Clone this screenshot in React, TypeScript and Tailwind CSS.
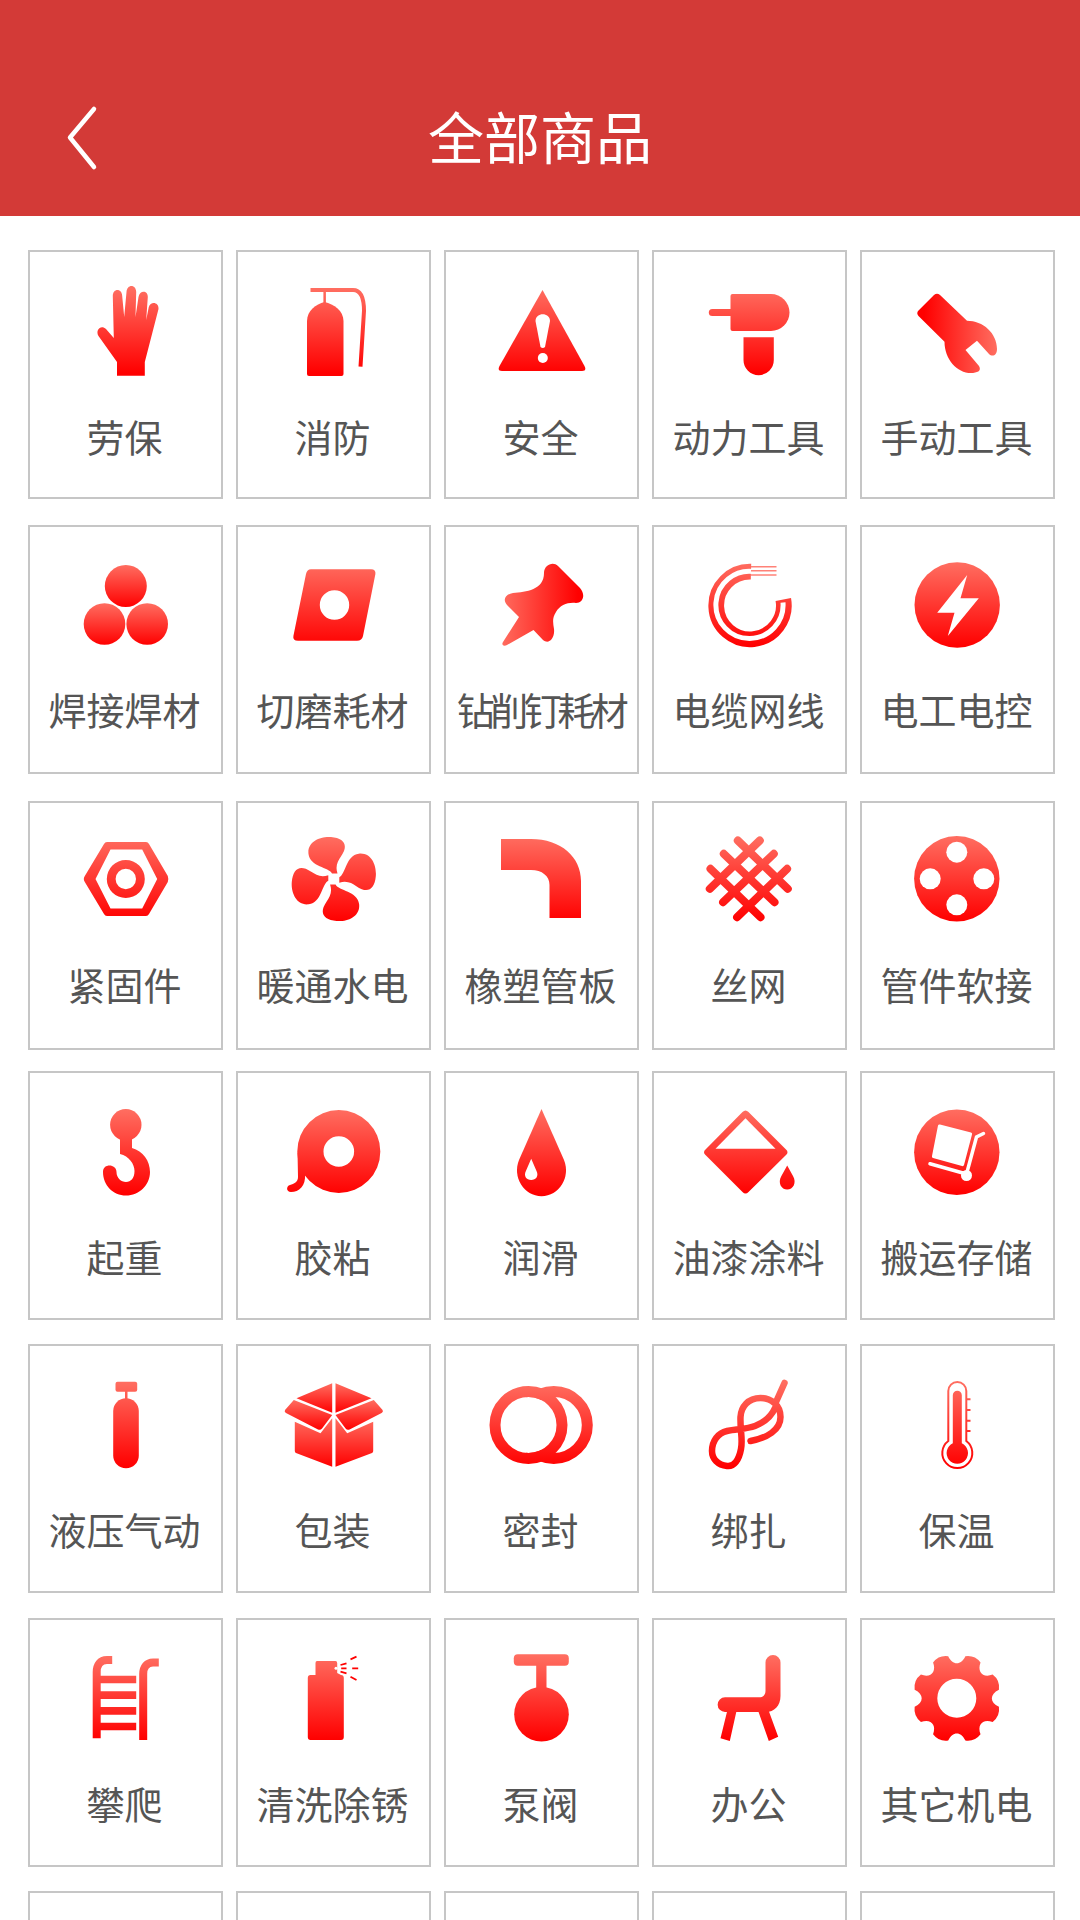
import { FC, ReactNode } from "react";

const V = "url(#rv)"; // whole-icon vertical fade
const B = "url(#rb)"; // fade per shape

const Ico: FC<{ children: ReactNode }> = ({ children }) => (
  <svg viewBox="0 0 100 100" className="ml-[2px] h-[100px] w-[100px] shrink-0 overflow-visible">
    {children}
  </svg>
);

const polar = (a: number, r: number) => {
  const t = (a * Math.PI) / 180;
  return `${(47.8 + r * Math.cos(t)).toFixed(2)} ${(50.3 + r * Math.sin(t)).toFixed(2)}`;
};

let gearPath = `M${polar(22.5 - 11, 43)}`;
for (let i = 0; i < 8; i++) {
  const a = 22.5 + i * 45;
  gearPath += ` Q${polar(a, 47)} ${polar(a + 11, 43)}`;
  gearPath += ` C${polar(a + 15, 33)} ${polar(a + 30, 33)} ${polar(a + 34, 43)}`;
}
gearPath += ` Z M${polar(0, 19.5)} A19.5 19.5 0 1 0 ${polar(180, 19.5)} A19.5 19.5 0 1 0 ${polar(0, 19.5)} Z`;

const blade = "M47 44.5 C44 38 25 38 23.5 25 C22 12 36 7 46 8 C57 9 62 14 59 22 C56 29 49 34 52.5 44.5 Z";

const rows = [
  {
    mt: "mt-[34px]",
    pt: "pt-[29px]",
    gap: "mt-[31px]",
    items: [
      {
        label: "劳保",
        icon: (
          <path
            fill={V}
            d="M40 81 L21.5 55 C18 49 24 43 29 48 L36.8 57 L35.8 15 C35.8 7 45 7 45.2 15 L47.2 36 L49.5 11 C50 3 59 3 59.2 11 L58.5 36 L61.5 16 C62.5 9 71 9 70.8 16 L69.2 39 L71.8 26 C73.5 20 82 21 81.5 28 L67.8 81 V94.7 H40 Z"
          />
        ),
      },
      {
        label: "消防",
        icon: (
          <>
            <path fill="none" stroke={V} strokeWidth="4" d="M25.5 9 H68 C76 9 79 16 79 30 L75.5 85.7" />
            <rect x="38.4" y="8" width="2.5" height="15" fill={V} />
            <path fill={V} d="M22 40 C22 30 31 23 39.5 21 C49 23 58.5 30 58.5 40 V93 Q58.5 95 56.5 95 H24 Q22 95 22 93 Z" />
          </>
        ),
      },
      {
        label: "安全",
        icon: (
          <>
            <path fill={V} d="M49.5 9 L91.5 85 Q94 90 89 90 H9 Q4 90 6.5 85 Z" />
            <path fill="#fff" d="M42.5 40 C42.5 31 57 31 57 40 L52 66 Q49.8 68 47.5 66 Z" />
            <circle cx="49.8" cy="77" r="5" fill="#fff" />
          </>
        ),
      },
      {
        label: "动力工具",
        icon: (
          <>
            <rect x="7.8" y="28" width="26" height="7" rx="3.5" fill={V} />
            <path fill={V} d="M29.5 15 Q29.5 13 31.5 13 H70 A18.5 18.5 0 0 1 70 50 H31.5 Q29.5 50 29.5 48 Z" />
            <path fill={V} d="M42.5 56.3 H72.8 V79 A15.1 15.1 0 0 1 42.5 79 Z" />
          </>
        ),
      },
      {
        label: "手动工具",
        icon: (
          <path
            fill="url(#rw)"
            d="M25 14 Q28 11.5 31 14 L58 39.7 C74 39.7 88 52 88 68 C88 75 83 76 80 73 L68 59.7 L56.5 69 L70 85 C73 90 68 92 62 92 C48 92 35.5 78 35.5 60.7 L9.5 35 Q7 32 9.5 29.5 Z"
          />
        ),
      },
    ],
  },
  {
    mt: "mt-[26px]",
    pt: "pt-[28px]",
    gap: "mt-[30px]",
    items: [
      {
        label: "焊接焊材",
        icon: (
          <>
            <circle cx="48.8" cy="31" r="21" fill={B} />
            <circle cx="27.5" cy="69" r="20.8" fill={B} />
            <circle cx="70.2" cy="69" r="20.8" fill={B} />
          </>
        ),
      },
      {
        label: "切磨耗材",
        icon: (
          <path
            fill={V}
            fillRule="evenodd"
            d="M26 14.3 H86 Q91 14.3 90.4 19 L78 81 Q77 85.7 72 85.7 H13 Q7.5 85.7 8.4 81 L21 19 Q22 14.3 26 14.3 Z M49.5 35.3 A14.7 14.7 0 1 0 49.5 64.7 A14.7 14.7 0 1 0 49.5 35.3 Z"
          />
        ),
      },
      {
        label: "钻削钉耗材",
        icon: (
          <path
            fill="url(#rh)"
            d="M51 18 C51 10 60 6 65 11 L87 33 C93 40 90 48 83 48 C75 47 67 50 63 57 C59 63 60 68 61 74 C62 83 56 90 50 85 L40.5 75 L14 90 C11 92 8 90 10 87 L26 62 L14 50 C9 44 13 39 20 38 C33 37 51 35 51 18 Z"
          />
        ),
      },
      {
        label: "电缆网线",
        icon: (
          <>
            <path fill="none" stroke={V} strokeWidth="15.7" d="M50 16.7 A33.8 33.8 0 1 0 82.3 44.5" />
            <path fill="none" stroke="#fff" strokeWidth="5" d="M53 16.6 A33.6 33.6 0 1 0 82 47.5" />
            <path fill="none" stroke="#ff8278" strokeWidth="1.4" d="M50 11.7 H75.5 M50 15.7 H75.5 M50 20 H75.5" />
          </>
        ),
      },
      {
        label: "电工电控",
        icon: (
          <>
            <circle cx="48.2" cy="50" r="42.7" fill={V} />
            <path fill="#fff" d="M58.2 20 L28.2 57.7 H45.5 L38.8 81 L69.8 43.3 H51.5 Z" />
          </>
        ),
      },
    ],
  },
  {
    mt: "mt-[27px]",
    pt: "pt-[26px]",
    gap: "mt-[31px]",
    items: [
      {
        label: "紧固件",
        icon: (
          <>
            <path
              fill={V}
              fillRule="evenodd"
              d="M30 13 H69 Q71 13 72 15 L90.8 47 Q91.8 50 90.8 53 L72 85 Q71 87 69 87 H30 Q28 87 27 85 L7.8 53 Q5.8 50 7.8 47 L27 15 Q28 13 30 13 Z M33.5 20.5 L18.5 50 L33.5 79.5 H65.2 L80.2 50 L65.2 20.5 Z"
            />
            <path
              fill={V}
              fillRule="evenodd"
              d="M48.8 31 A19 19 0 1 0 48.8 69 A19 19 0 1 0 48.8 31 Z M48.8 39.8 A10.2 10.2 0 1 1 48.8 60.2 A10.2 10.2 0 1 1 48.8 39.8 Z"
            />
          </>
        ),
      },
      {
        label: "暖通水电",
        icon: (
          <>
            <defs>
              <clipPath id="fan">
                <path d={blade} />
                <path d={blade} transform="rotate(90 48.8 50)" />
                <path d={blade} transform="rotate(180 48.8 50)" />
                <path d={blade} transform="rotate(270 48.8 50)" />
              </clipPath>
            </defs>
            <rect x="0" y="0" width="100" height="100" fill={V} clipPath="url(#fan)" />
          </>
        ),
      },
      {
        label: "橡塑管板",
        icon: <path fill={V} d="M8 10 H38 C68 10 88 28 88 52 V89 H56.5 V56 C56.5 47 49 41 38 41 H8 Z" />,
      },
      {
        label: "丝网",
        icon: (
          <path
            fill="none"
            stroke={V}
            strokeWidth="8"
            strokeLinecap="round"
            d="M36.8 11.5 L86.8 59.8 M22.8 24.8 L73.5 73.2 M9.5 39.8 L59.5 88.2 M58.8 11.5 L8.8 59.8 M72.8 24.8 L22.1 73.2 M86.1 39.8 L36.1 88.2"
          />
        ),
      },
      {
        label: "管件软接",
        icon: (
          <>
            <circle cx="47.8" cy="49.8" r="42.7" fill={V} />
            <circle cx="47.8" cy="23.2" r="10.5" fill="#fff" />
            <circle cx="21.2" cy="49.8" r="10.5" fill="#fff" />
            <circle cx="74.8" cy="49.8" r="10.5" fill="#fff" />
            <circle cx="47.8" cy="75.8" r="10.5" fill="#fff" />
          </>
        ),
      },
    ],
  },
  {
    mt: "mt-[21px]",
    pt: "pt-[29px]",
    gap: "mt-[30px]",
    items: [
      {
        label: "起重",
        icon: (
          <>
            <circle cx="48.8" cy="22.8" r="15.7" fill={V} />
            <path
              fill={V}
              d="M43 34 V52 C52 54 57.5 62 57.5 69 C57.5 76 54 80 49 80 C44 80 39.5 76 39.5 70 C39.5 62 26 61 26 70 C26 83 36 93.5 49 93.5 C62 93.5 73 83 73 70 C73 59 66 49 55 46 V34 Z"
            />
          </>
        ),
      },
      {
        label: "胶粘",
        icon: (
          <>
            <path
              fill={V}
              fillRule="evenodd"
              d="M53.8 8 A41.5 41.5 0 1 0 53.8 91 A41.5 41.5 0 1 0 53.8 8 Z M53.8 34.2 A15.3 15.3 0 1 1 53.8 64.8 A15.3 15.3 0 1 1 53.8 34.2 Z"
            />
            <path fill={V} d="M12.5 50 L13 75 C13 80 9 82 5 83 C1 84 1 90 6 90 C14 90 21 84 20 72 Z" />
          </>
        ),
      },
      {
        label: "润滑",
        icon: (
          <>
            <path fill={V} d="M48.5 7 L71 58 C78 75 66 94.2 48.5 94.2 C31 94.2 19 75 26 58 Z" />
            <path fill="#fff" d="M38.2 56.8 L43.5 69 C46 74 43 78 38.2 78 C33.4 78 30.4 74 32.9 69 Z" />
          </>
        ),
      },
      {
        label: "油漆涂料",
        icon: (
          <>
            <path fill={V} d="M41.5 10 Q44.5 7 47.5 10 L85 47.5 Q88 50.2 85 53 L47.5 90 Q44.5 93 41.5 90 L4.5 53 Q1.5 50.2 4.5 47.5 Z" />
            <path fill="#fff" d="M44.5 16.2 L74.5 46.8 H14.5 Z" />
            <path fill={V} d="M86.2 63.5 L92 74 C96 81 92 87.5 86.2 87.5 C80.4 87.5 76.4 81 80.4 74 Z" />
          </>
        ),
      },
      {
        label: "搬运存储",
        icon: (
          <>
            <circle cx="47.8" cy="50.2" r="42.7" fill={V} />
            <path fill="#fff" d="M31 22.5 L62 30.5 Q63.5 31 63 32.5 L55 63 Q54.5 64.5 53 64 L24 56 Q22.5 55.5 23 54 L29 23.5 Q29.5 22 31 22.5 Z" />
            <path fill="none" stroke="#fff" strokeWidth="3.5" strokeLinecap="round" d="M74.5 31.5 L67.5 35 L57.5 72 L21 61.8" />
            <circle cx="57.5" cy="73.5" r="5.5" fill="#fff" />
          </>
        ),
      },
    ],
  },
  {
    mt: "mt-[24px]",
    pt: "pt-[29px]",
    gap: "mt-[30px]",
    items: [
      {
        label: "液压气动",
        icon: (
          <>
            <rect x="38.5" y="6.7" width="21.7" height="10" rx="2" fill={V} />
            <rect x="48" y="16" width="2.5" height="8" fill={V} />
            <rect x="36.2" y="23.3" width="25.6" height="70" rx="12.8" fill={V} />
          </>
        ),
      },
      {
        label: "包装",
        icon: (
          <>
            <path fill={B} d="M47.2 8.3 L11.5 23.3 L47.2 37.7 Z" />
            <path fill={B} d="M50.5 8.3 L86.5 23.3 L50.5 37.7 Z" />
            <path fill={B} d="M8.8 25 L0 35 Q-1 37 1 38 L33 54.5 Q35.5 55.5 37 53.5 L47.2 40 Z" />
            <path fill={B} d="M88.8 25 L97.6 35 Q98.6 37 96.6 38 L64.6 54.5 Q62.1 55.5 60.6 53.5 L50.5 40 Z" />
            <path fill={B} d="M9.8 46.7 L35.5 58.3 L47.2 43.3 V91.7 L11 78 Q9.8 77.5 9.8 76 Z" />
            <path fill={B} d="M88.2 46.7 L62.2 58.3 L50.5 43.3 V91.7 L87 78 Q88.2 77.5 88.2 76 Z" />
          </>
        ),
      },
      {
        label: "密封",
        icon: (
          <>
            <circle cx="60.8" cy="50" r="33.5" fill="none" stroke={V} strokeWidth="11" />
            <circle cx="35.5" cy="50" r="28" fill="#fff" />
            <circle cx="35.5" cy="50" r="33.5" fill="none" stroke={V} strokeWidth="11" />
          </>
        ),
      },
      {
        label: "绑扎",
        icon: (
          <path
            fill="none"
            stroke={V}
            strokeWidth="6.5"
            strokeLinecap="round"
            d="M83.5 8 L75 27 M49.5 66 C66 63 79.5 55 79.5 42 C79.5 30 70 23 59.5 23 C47 23 40 32 39.5 42 C39 56 42 64 40 74 C38 85 33 92 26 91 C17 90 11 84 11 76 C11 66 17 58 26 56 C36 54 46 54 54 51 C64 47 71 40 74 33"
          />
        ),
      },
      {
        label: "保温",
        icon: (
          <>
            <path
              fill="none"
              stroke={V}
              strokeWidth="2"
              d="M39.3 66 V16 A9 9 0 0 1 57.3 16 V66 A15 15 0 1 1 39.3 66 Z M57.5 24.3 H61.5 M57.5 35 H61.5 M57.5 45.7 H61.5 M57.5 56 H61.5"
            />
            <path fill={V} d="M43.8 68.3 V20.2 A4.5 4.5 0 0 1 52.8 20.2 V68.3 A10.7 10.7 0 1 1 43.8 68.3 Z" />
          </>
        ),
      },
    ],
  },
  {
    mt: "mt-[25px]",
    pt: "pt-[28px]",
    gap: "mt-[31px]",
    items: [
      {
        label: "攀爬",
        icon: (
          <>
            <path
              fill="none"
              stroke={V}
              strokeWidth="8"
              d="M35.2 12 H30 C23 12 19.7 17 19.7 24 V90.3 M81.8 14.5 H76 C70 14.5 66.2 19 66.2 26 V92"
            />
            <path fill={V} d="M23 27.7 H59.2 V35.3 H23 Z M23 43.3 H59.2 V51 H23 Z M23 59 H59.2 V66.7 H23 Z M23 74.7 H59.2 V82.3 H23 Z" />
          </>
        ),
      },
      {
        label: "清洗除锈",
        icon: (
          <>
            <path
              fill={V}
              d="M32 13 H50.5 Q52.2 13 52.2 15 V25 L56 27 Q58.8 27 58.8 30 V89 Q58.8 92 56 92 H25.5 Q22.8 92 22.8 89 V30 Q22.8 27 25.5 27 H30.5 V15 Q30.5 13 32 13 Z"
            />
            <circle cx="51" cy="20.3" r="1.5" fill="#fff" />
            <path
              fill="none"
              stroke="#ff0000"
              strokeWidth="1.8"
              d="M65.5 11.3 L71.5 8.7 M67.2 20.3 H73.2 M65.5 28.7 L71.5 32 M55.5 17 L61.5 15.3 M56.2 20.3 H61.5 M55.5 23.7 L61.5 25.3"
            />
          </>
        ),
      },
      {
        label: "泵阀",
        icon: (
          <>
            <rect x="20.8" y="6.3" width="55" height="11.4" rx="4" fill={V} />
            <rect x="43.2" y="17" width="10.3" height="28" fill={V} />
            <circle cx="48.5" cy="66.3" r="27.3" fill={V} />
          </>
        ),
      },
      {
        label: "办公",
        icon: (
          <>
            <path
              fill={V}
              d="M64.5 14.5 A7.5 7.5 0 0 1 79.5 14.5 V48 C79.5 58 73 64 65 64 H24 A7.3 7.3 0 0 1 24 49.3 H58 C62 49.3 64.5 47 64.5 43 Z"
            />
            <path fill={V} d="M26.2 63 H35.5 L28.8 93 L19.5 90.3 Z M57.2 63 H67.8 L77.2 88.7 L67.8 93 Z" />
          </>
        ),
      },
      {
        label: "其它机电",
        icon: <path fill={V} fillRule="evenodd" d={gearPath} />,
      },
    ],
  },
];

const lastRow = [0, 1, 2, 3, 4];

const App: FC = () => {
  return (
    <div className="h-[1920px] w-[1080px] overflow-hidden bg-white font-['Noto_Sans_CJK_SC','Noto_Sans',sans-serif]">
      <svg className="absolute h-0 w-0">
        <defs>
          <linearGradient id="rv" gradientUnits="userSpaceOnUse" x1="0" y1="8" x2="0" y2="92">
            <stop offset="0" stopColor="#ff6d60" />
            <stop offset="1" stopColor="#ff0000" />
          </linearGradient>
          <linearGradient id="rb" x1="0" y1="0" x2="0" y2="1">
            <stop offset="0" stopColor="#ff6d60" />
            <stop offset="1" stopColor="#ff0000" />
          </linearGradient>
          <linearGradient id="rh" gradientUnits="userSpaceOnUse" x1="8" y1="0" x2="85" y2="0">
            <stop offset="0" stopColor="#ff6d60" />
            <stop offset="1" stopColor="#ff0000" />
          </linearGradient>
          <linearGradient id="rw" gradientUnits="userSpaceOnUse" x1="15" y1="0" x2="88" y2="0">
            <stop offset="0" stopColor="#ff0000" />
            <stop offset="1" stopColor="#ff6d60" />
          </linearGradient>
        </defs>
      </svg>

      <header className="grid h-[216px] grid-cols-[1fr_auto_1fr] items-center bg-[#d33a37] pt-[60px]">
        <svg viewBox="0 0 34 68" className="ml-[65px] h-[68px] w-[34px]">
          <path d="M29 5 L5 33.5 L29 63" fill="none" stroke="#fff" strokeWidth="4.5" strokeLinecap="round" strokeLinejoin="round" />
        </svg>
        <h1 className="mb-[7px] text-[56px] leading-[72px] font-normal text-white">全部商品</h1>
        <div />
      </header>

      <main className="pl-[28px]">
        {rows.map((row) => (
          <div key={row.items[0].label} className={`flex gap-[13px] ${row.mt}`}>
            {row.items.map((item) => (
              <div
                key={item.label}
                className={`flex h-[249px] w-[195px] flex-col items-center border-2 border-[#c6c6c6] ${row.pt}`}
              >
                <Ico>{item.icon}</Ico>
                <span
                  className={`mr-[2px] text-[38px] leading-[48px] whitespace-nowrap text-[#555555] ${row.gap} ${
                    item.label.length > 4 ? "tracking-[-4.5px]" : ""
                  }`}
                >
                  {item.label}
                </span>
              </div>
            ))}
          </div>
        ))}
        <div className="mt-[24px] flex gap-[13px]">
          {lastRow.map((n) => (
            <div key={n} className="h-[249px] w-[195px] border-2 border-[#c6c6c6]" />
          ))}
        </div>
      </main>
    </div>
  );
};

export default App;
